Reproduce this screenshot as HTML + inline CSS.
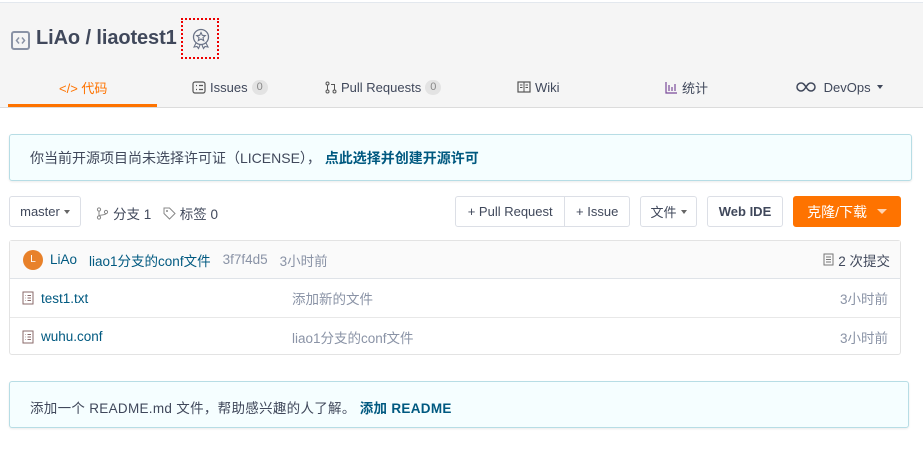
<!DOCTYPE html>
<html><head><meta charset="utf-8"><style>
*{box-sizing:border-box;margin:0;padding:0}
body{width:923px;height:460px;background:#fff;font-family:"Liberation Sans","Noto Sans CJK SC",sans-serif;font-size:13px;color:#40485b;position:relative;overflow:hidden}
.abs{position:absolute}
.hdr{left:0;top:2px;width:923px;height:106px;background:#f5f5f5;border-top:1px solid #e3e8ee;border-bottom:1px solid #dcdcdc}
.tab{position:absolute;top:78px;font-size:13px;color:#40485b;white-space:nowrap;display:flex;align-items:center;gap:4px;height:18px}
.cnt{background:#e3e3e3;color:#888;border-radius:8px;padding:0 5px;font-size:11px;line-height:15px}
.box{background:#f5feff;border:1px solid #b7dde5;border-radius:3px;box-shadow:0 1px 2px rgba(0,0,0,.08)}
.btn{position:absolute;top:196px;height:31px;border:1px solid #dcdfe6;border-radius:3px;background:#fff;display:flex;align-items:center;justify-content:center;font-size:13px;color:#40485b}
.caret{display:inline-block;border-left:3.5px solid transparent;border-right:3.5px solid transparent;border-top:4px solid #666;margin-left:4px}
.row{position:absolute;left:0;width:100%;height:38px;border-top:1px solid #e8e8e8;display:flex;align-items:center;font-size:13.5px}
</style></head><body>
<div class="abs hdr"></div>
<svg class="abs" style="left:11px;top:31px" width="19" height="19" viewBox="0 0 19 19"><rect x="1" y="1" width="17" height="17" rx="2" fill="none" stroke="#8a93a6" stroke-width="2"/><path d="M8 6.5L5.5 9.5 8 12.5M11 6.5l2.5 3-2.5 3" fill="none" stroke="#8a93a6" stroke-width="1.5"/></svg>
<div class="abs" style="left:36px;top:27px;font-size:20px;font-weight:bold;color:#40485b;letter-spacing:-0.1px">LiAo / liaotest1</div>
<div class="abs" style="left:181px;top:18px;width:38px;height:41px;border:2px dotted #e00"></div>
<svg class="abs" style="left:191px;top:28px" width="20" height="22" viewBox="0 0 20 22"><circle cx="10" cy="9" r="7.5" fill="none" stroke="#6a7387" stroke-width="1.3"/><path d="M10 4.5l1.3 2.8 3 .3-2.3 2 .7 3-2.7-1.6-2.7 1.6.7-3-2.3-2 3-.3z" fill="none" stroke="#6a7387" stroke-width="1.1"/><path d="M5 15l-2 4 3-.5 1.5 2 1.5-3.5M15 15l2 4-3-.5-1.5 2-1.5-3.5" fill="none" stroke="#6a7387" stroke-width="1.1"/></svg>
<div class="tab" style="left:59px;color:#fe7300">&lt;/&gt; 代码</div>
<div class="abs" style="left:8px;top:104px;width:149px;height:3px;background:#fe7300"></div>
<div class="tab" style="left:192px"><svg width="14" height="13" viewBox="0 0 14 13"><rect x="1" y="1" width="12" height="11" rx="2" fill="none" stroke="#555" stroke-width="1.2"/><path d="M4 4.5h1M7 4.5h4M4 8.5h1M7 8.5h4" stroke="#555" stroke-width="1.2"/></svg>Issues <span class="cnt">0</span></div>
<div class="tab" style="left:325px"><svg width="12" height="13" viewBox="0 0 12 13"><circle cx="2.5" cy="2.5" r="1.5" fill="none" stroke="#555"/><circle cx="2.5" cy="10.5" r="1.5" fill="none" stroke="#555"/><circle cx="9.5" cy="10.5" r="1.5" fill="none" stroke="#555"/><path d="M2.5 4v5M9.5 9V3.5H6" fill="none" stroke="#555"/></svg>Pull Requests <span class="cnt">0</span></div>
<div class="tab" style="left:517px"><svg width="14" height="12" viewBox="0 0 14 12"><rect x="1" y="1" width="12" height="10" fill="none" stroke="#555" stroke-width="1.2"/><path d="M7 1v10M3 4h2.5M3 6.5h2.5M8.5 4H11M8.5 6.5H11" stroke="#555"/></svg>Wiki</div>
<div class="tab" style="left:665px"><svg width="13" height="13" viewBox="0 0 13 13"><path d="M1 1v11h11M4 4v6M7 6v4M10 3v7" fill="none" stroke="#7a4a9a" stroke-width="1.2"/></svg>统计</div>
<div class="tab" style="left:796px"><svg width="20" height="10" viewBox="0 0 20 10"><path d="M10 5c-2-3-3-4-5-4a4 4 0 000 8c2 0 3-1 5-4s3-4 5-4a4 4 0 010 8c-2 0-3-1-5-4z" fill="none" stroke="#40485b" stroke-width="1.5"/></svg>&nbsp;DevOps<span class="caret" style="margin-left:2px;border-top-color:#40485b"></span></div>

<div class="abs box" style="left:9px;top:134px;width:903px;height:47px"></div>
<div class="abs" style="left:30px;top:148px;font-size:14px;color:#40485b">你当前开源项目尚未选择许可证（LICENSE），&nbsp;<b style="color:#005980">点此选择并创建开源许可</b></div>

<div class="btn" style="left:9px;width:72px">master<span class="caret"></span></div>
<div class="abs" style="left:96px;top:203px;font-size:13.5px;display:flex;align-items:center;gap:4px"><svg width="13" height="13" viewBox="0 0 13 13"><circle cx="3" cy="2.5" r="1.6" fill="none" stroke="#888"/><circle cx="3" cy="10.5" r="1.6" fill="none" stroke="#888"/><circle cx="10" cy="5" r="1.6" fill="none" stroke="#888"/><path d="M3 4v5M10 6.5c0 2-7 1-7 2.5" fill="none" stroke="#888"/></svg>分支 1 &nbsp;<svg width="13" height="13" viewBox="0 0 13 13"><path d="M1 1h5.5l5.5 5.5-5.5 5.5L1 6.5z" fill="none" stroke="#888"/><circle cx="4" cy="4" r="1" fill="#888"/></svg>标签 0</div>
<div class="btn" style="left:455px;width:175px;justify-content:flex-start"><span style="width:110px;text-align:center;border-right:1px solid #dcdfe6;line-height:29px">+ Pull Request</span><span style="width:64px;text-align:center">+ Issue</span></div>
<div class="btn" style="left:640px;width:57px">文件<span class="caret"></span></div>
<div class="btn" style="left:707px;width:76px;font-weight:bold">Web IDE</div>
<div class="btn" style="left:793px;width:108px;background:#fe7300;border-color:#fe7300;color:#fff;font-size:14px">克隆/下载&nbsp;<span class="caret" style="border-top-color:#ffd3b0;margin-left:6px;border-left-width:5px;border-right-width:5px;border-top-width:5px"></span></div>

<div class="abs" style="left:9px;top:240px;width:892px;height:115px;border:1px solid #e3e3e3;border-radius:3px">
 <div class="row" style="top:0;border-top:none;background:#fafafa;height:38px;border-bottom:1px solid #dfe3e8">
  <span style="margin-left:13px;width:20px;height:20px;border-radius:50%;background:#e8812a;color:#fff;font-size:10px;display:flex;align-items:center;justify-content:center">L</span>
  <span style="margin-left:7px;color:#005980">LiAo</span><span style="margin-left:12px;color:#005980">liao1分支的conf文件</span><span style="margin-left:12px;color:#8a93a6">3f7f4d5</span><span style="margin-left:12px;color:#8a93a6">3小时前</span>
  <span style="margin-left:auto;margin-right:10px;display:flex;align-items:center;gap:4px"><svg width="11" height="13" viewBox="0 0 11 13"><path d="M1 1h9v11H1z M3 4h5M3 6.5h5M3 9h5" fill="none" stroke="#777"/></svg>2 次提交</span>
 </div>
 <div class="row" style="top:38px;border-top:none"><svg style="margin-left:12px" width="12" height="14" viewBox="0 0 12 14"><path d="M1 1h10v12H1zM3.5 4.5h.5M5.5 4.5h3.5M3.5 7h.5M5.5 7h3.5M3.5 9.5h.5M5.5 9.5h3.5" fill="none" stroke="#8a6a6a"/></svg><span style="margin-left:7px;color:#005980;width:251px">test1.txt</span><span style="color:#8a93a6">添加新的文件</span><span style="margin-left:auto;margin-right:12px;color:#8a93a6">3小时前</span></div>
 <div class="row" style="top:76px"><svg style="margin-left:12px" width="12" height="14" viewBox="0 0 12 14"><path d="M1 1h10v12H1zM3.5 4.5h.5M5.5 4.5h3.5M3.5 7h.5M5.5 7h3.5M3.5 9.5h.5M5.5 9.5h3.5" fill="none" stroke="#8a6a6a"/></svg><span style="margin-left:7px;color:#005980;width:251px">wuhu.conf</span><span style="color:#8a93a6">liao1分支的conf文件</span><span style="margin-left:auto;margin-right:12px;color:#8a93a6">3小时前</span></div>
</div>

<div class="abs box" style="left:9px;top:381px;width:900px;height:47px"></div>
<div class="abs" style="left:30px;top:397px;font-size:13.5px;letter-spacing:0.3px;color:#40485b">添加一个 README.md 文件，帮助感兴趣的人了解。&nbsp;<b style="color:#005980">添加 README</b></div>
</body></html>
